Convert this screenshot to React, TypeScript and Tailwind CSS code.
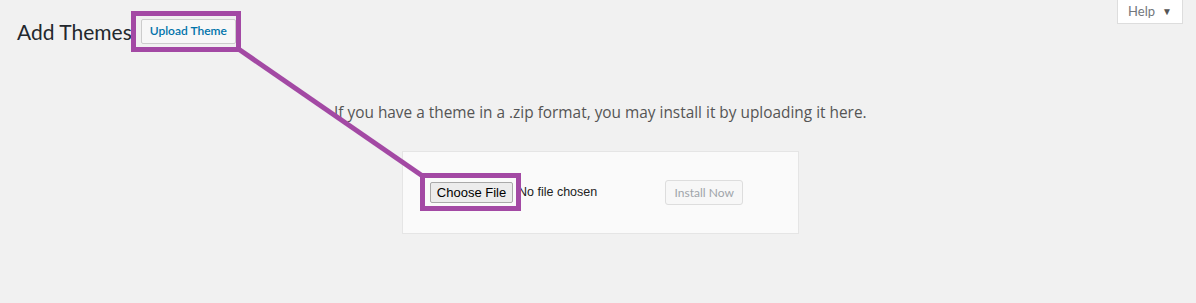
export default function App() {
  return (
    <div className="relative h-[303px] w-[1196px] overflow-hidden bg-[#f1f1f1] font-['Lato',sans-serif] text-[#444]">
      {/* help tab */}
      <div className="flex justify-end pr-[13px]">
        <button className="flex h-[24px] w-[66px] items-center justify-center gap-[7px] border border-t-0 border-[#ddd] bg-white text-[13px] text-[#72777c]">
          Help
          <span className="text-[10px] text-[#555]">▼</span>
        </button>
      </div>

      {/* heading */}
      <div className="-mt-[8px] flex items-center pl-[17px]">
        <h1 className="pt-[1px] text-[21px] font-normal leading-[29px] text-[#23282d]">Add Themes</h1>
        <button className="ml-[9px] h-[25px] rounded-[2px] border border-[#ccc] bg-[#f7f7f7] px-[8px] text-[12px] font-semibold text-[#0073aa]">
          Upload Theme
        </button>
      </div>

      {/* upload area */}
      <p className="mt-[56px] pl-[334px] font-['Open_Sans',sans-serif] text-[15.4px] leading-[22px] text-[#555]">
        If you have a theme in a .zip format, you may install it by uploading it here.
      </p>

      <div className="ml-[402px] mt-[27px] flex h-[83px] w-[397px] items-center border border-[#e5e5e5] bg-[#fafafa] pl-[27px]">
        <button className="h-[21px] w-[83px] rounded-[2px] border border-[#a9a9a9] bg-[#ececec] font-['Liberation_Sans',sans-serif] text-[13px] text-black">
          Choose File
        </button>
        <span className="ml-[5px] font-['Liberation_Sans',sans-serif] text-[12.5px] text-[#222]">No file chosen</span>
        <button className="ml-[68px] h-[25px] w-[78px] rounded-[3px] border border-[#ddd] bg-[#f7f7f7] text-[12px] text-[#a0a5aa]">
          Install Now
        </button>
      </div>

      {/* annotation overlay */}
      <svg className="pointer-events-none absolute left-0 top-0" width="1196" height="303" viewBox="0 0 1196 303">
        <g fill="none" stroke="#a349a4" strokeWidth="5">
          <rect x="133.5" y="13.5" width="105" height="36" />
          <rect x="422.5" y="175.5" width="96" height="33" />
          <line x1="237" y1="48" x2="424" y2="177" />
        </g>
      </svg>
    </div>
  );
}
